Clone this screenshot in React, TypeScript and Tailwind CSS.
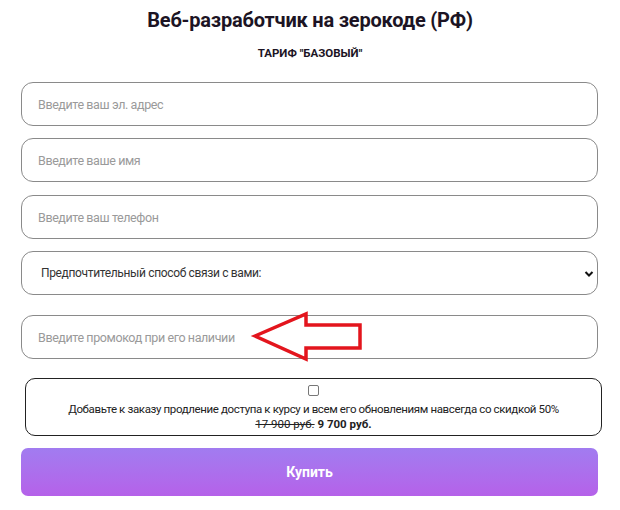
import React from "react";

export default function App() {
  const inputCls =
    "w-full h-[44px] rounded-[12px] border border-[#8a8a8a] bg-white px-[16px] text-[12.5px] tracking-[-0.4px] text-[#333] placeholder:text-[#9a9a9a] outline-none";
  return (
    <div
      className="w-[620px] h-[510px] bg-white overflow-hidden"
      style={{ fontFamily: "Roboto, 'Open Sans', sans-serif" }}
    >
      <div className="pt-[6px] flex flex-col items-center">
        <h1 className="text-[20px] leading-[28px] font-bold text-[#1c1424] tracking-[-0.2px]">
          Веб-разработчик на зерокоде (РФ)
        </h1>
        <div className="mt-[11px] text-[11.5px] leading-[16px] font-bold text-[#1c1424]">
          ТАРИФ "БАЗОВЫЙ"
        </div>
      </div>
      <div className="pl-[21px] pr-[22px] mt-[21px] flex flex-col">
        <input className={inputCls} placeholder="Введите ваш эл. адрес" />
        <input className={inputCls + " mt-[12px]"} placeholder="Введите ваше имя" />
        <input className={inputCls + " mt-[13px]"} placeholder="Введите ваш телефон" />
        <div className="relative mt-[12px] h-[44px] rounded-[12px] border border-[#8a8a8a] bg-white flex items-center px-[19px]">
          <span className="text-[12px] tracking-[-0.35px] text-[#333]">
            Предпочтительный способ связи с вами:
          </span>
          <svg
            className="absolute right-[3px] top-[18px]"
            width="10"
            height="8"
            viewBox="0 0 10 8"
          >
            <path d="M1.5 2 L5 5.5 L8.5 2" fill="none" stroke="#111" strokeWidth="2" />
          </svg>
        </div>
        <div className="relative mt-[20px]">
          <input className={inputCls} placeholder="Введите промокод при его наличии" />
          <svg
            className="absolute left-0 top-0 pointer-events-none"
            width="577"
            height="50"
            viewBox="21 315 577 50"
            style={{ overflow: "visible" }}
          >
            <polygon
              points="255,336 306,314 306,325 360,325 360,348 306,348 306,359"
              fill="none"
              stroke="#e3151d"
              strokeWidth="3.5"
              strokeLinejoin="miter"
            />
          </svg>
        </div>
        <div className="mt-[19px] ml-[4px] mr-[-4px] h-[58px] rounded-[10px] border border-[#222] flex flex-col items-center pt-[6px]">
          <div className="w-[11px] h-[11px] rounded-[2px] border border-[#777] bg-white" />
          <div className="mt-[6px] text-[11.5px] leading-[15px] text-[#222] tracking-[-0.37px]">
            Добавьте к заказу продление доступа к курсу и всем его обновлениям навсегда со скидкой 50%
          </div>
          <div className="text-[11.5px] leading-[15px] text-[#222]">
            <span className="line-through">17 900 руб.</span>{" "}
            <span className="font-bold">9 700 руб.</span>
          </div>
        </div>
        <button className="mt-[12px] h-[48px] w-full rounded-[7px] bg-gradient-to-b from-[#a17cf0] to-[#b561e9] text-white text-[14px] font-bold">
          Купить
        </button>
      </div>
    </div>
  );
}
